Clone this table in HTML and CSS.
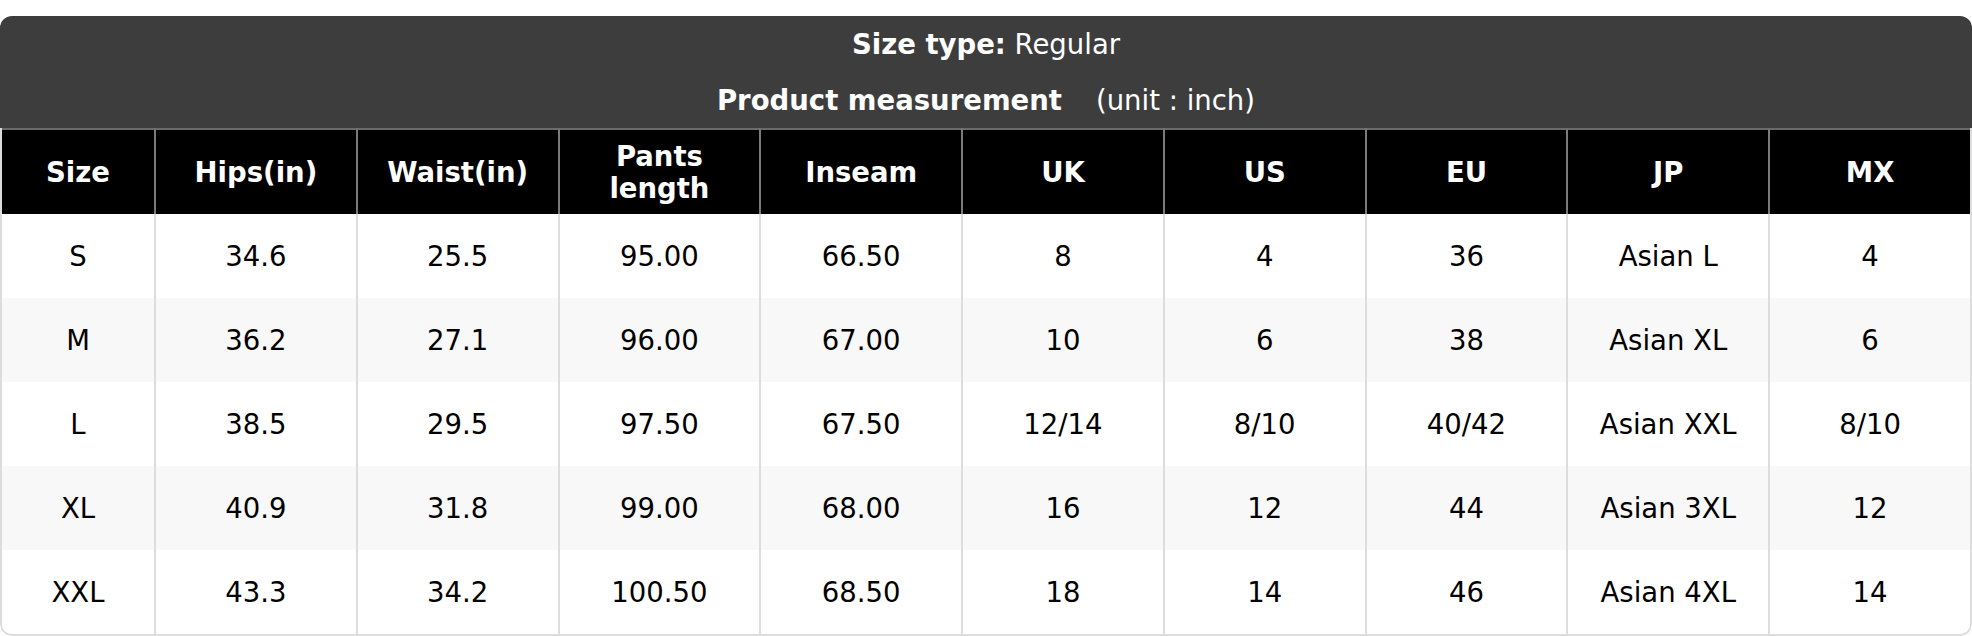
FILE: index.html
```html
<!DOCTYPE html>
<html lang="en">
<head>
<meta charset="utf-8">
<title>Size chart</title>
<link rel="stylesheet" href="styles.css">
</head>
<body>
<div class="card">
  <div class="caption">
    <div class="caption-line"><b>Size type:</b> Regular</div>
    <div class="caption-line"><b>Product measurement</b><span class="unit">(unit : inch)</span></div>
  </div>
  <div class="table-wrap">
    <table class="size-table">
      <colgroup>
        <col class="col-size">
        <col><col><col><col><col><col><col><col><col>
      </colgroup>
      <thead>
        <tr>
          <th>Size</th><th>Hips(in)</th><th>Waist(in)</th><th>Pants<br>length</th><th>Inseam</th><th>UK</th><th>US</th><th>EU</th><th>JP</th><th>MX</th>
        </tr>
      </thead>
      <tbody>
        <tr><td>S</td><td>34.6</td><td>25.5</td><td>95.00</td><td>66.50</td><td>8</td><td>4</td><td>36</td><td>Asian L</td><td>4</td></tr>
        <tr><td>M</td><td>36.2</td><td>27.1</td><td>96.00</td><td>67.00</td><td>10</td><td>6</td><td>38</td><td>Asian XL</td><td>6</td></tr>
        <tr><td>L</td><td>38.5</td><td>29.5</td><td>97.50</td><td>67.50</td><td>12/14</td><td>8/10</td><td>40/42</td><td>Asian XXL</td><td>8/10</td></tr>
        <tr><td>XL</td><td>40.9</td><td>31.8</td><td>99.00</td><td>68.00</td><td>16</td><td>12</td><td>44</td><td>Asian 3XL</td><td>12</td></tr>
        <tr><td>XXL</td><td>43.3</td><td>34.2</td><td>100.50</td><td>68.50</td><td>18</td><td>14</td><td>46</td><td>Asian 4XL</td><td>14</td></tr>
      </tbody>
    </table>
  </div>
</div>
</body>
</html>
```

FILE: styles.css
```css
html, body {
  margin: 0;
  padding: 0;
  background: #ffffff;
}

body {
  font-family: "DejaVu Sans", Verdana, sans-serif;
  color: #000;
}

.card {
  margin-top: 16px;
  border-radius: 12px;
  overflow: hidden;
  width: 1972px;
}

.caption {
  background: #3d3d3d;
  color: #ffffff;
  font-size: 27.5px;
  display: flex;
  flex-direction: column;
}

.caption-line {
  height: 56px;
  display: flex;
  align-items: center;
  justify-content: center;
  white-space: pre;
}

.caption-line b {
  font-weight: bold;
}

.unit {
  margin-left: 34px;
}

.table-wrap {
  border-left: 2px solid #dcdcdc;
  border-right: 2px solid #dcdcdc;
  border-bottom: 2px solid #dcdcdc;
  border-radius: 0 0 12px 12px;
  overflow: hidden;
}

.size-table {
  width: 100%;
  table-layout: fixed;
  border-collapse: separate;
  border-spacing: 0;
  font-size: 27.5px;
  line-height: 32px;
}

.col-size {
  width: 152px;
}

.size-table th {
  background: #000;
  color: #fff;
  font-weight: bold;
  height: 84px;
  box-sizing: border-box;
  padding: 10px 6px;
  border-top: 2px solid #6a6a6a;
  border-left: 2px solid #7a7a7a;
  text-align: center;
  vertical-align: middle;
}

.size-table th:first-child {
  border-left: 0;
}

.size-table td {
  height: 84px;
  box-sizing: border-box;
  padding: 26px 6px;
  border-left: 2px solid #dddddd;
  text-align: center;
  vertical-align: middle;
  background: #ffffff;
}

.size-table td:first-child {
  border-left: 0;
}

.size-table tbody tr:nth-child(even) td {
  background: #f8f8f8;
}
```
